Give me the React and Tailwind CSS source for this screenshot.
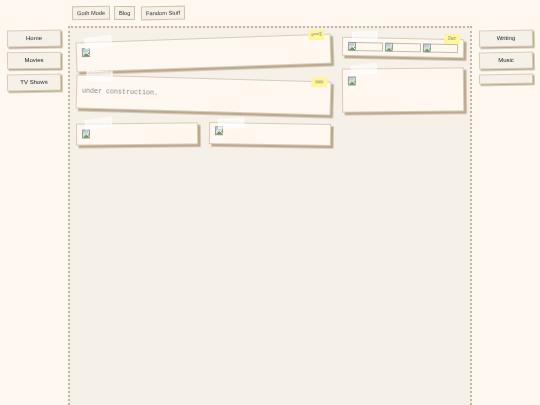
import React from "react";

const BrokenImage = () => (
  <svg width="8" height="9" viewBox="0 0 8 9" className="block shrink-0">
    <rect x="0.5" y="0.5" width="7" height="8" fill="#dfe6e6" stroke="#9a9c90" />
    <path d="M1 1h5v3H1z" fill="#bccfdc" />
    <path d="M1 8l3-3 1.500 1L7 4.500V8z" fill="#6f9a5c" />
    <path d="M4.500 4.500l3 3" stroke="#ffffff" strokeWidth="1" />
  </svg>
);

const Tape = ({ className }) => (
  <div
    className={`absolute h-[10px] bg-white/60 border border-dashed border-white/80 ${className}`}
  />
);

const Sticky = ({ label, className }) => (
  <div
    className={`absolute w-[16px] h-[10px] bg-[#fff59c] flex items-center justify-center text-[4.5px] text-[#8a8a70] font-['Liberation_Mono',monospace] ${className}`}
  >
    {label}
  </div>
);

const NavButton = ({ label, className }) => (
  <div
    className={`w-[54px] h-[17px] flex items-center justify-center bg-[#f5f0e8] border-[1.5px] border-[#d8ccb8] shadow-[1.5px_1.5px_0_#bba98e] text-[6px] text-[#222222] will-change-transform ${className}`}
  >
    {label}
  </div>
);

const TopButton = ({ label, className }) => (
  <div
    className={`h-[14px] px-[4px] flex items-center bg-[#f5f0e8] border-[1.5px] border-[#cfc2ac] text-[5.7px] text-[#333333] will-change-transform ${className}`}
  >
    {label}
  </div>
);

const Card = ({ className, children }) => (
  <div
    className={`relative bg-[#fff8f0] border-[1.5px] border-[#d8ccb8] shadow-[2.5px_2.5px_0_#bba98e] will-change-transform ${className}`}
  >
    {children}
  </div>
);

const Thumb = () => (
  <div className="flex-1 h-[9px] border border-[#c9bba4]">
    <div className="-mt-px -ml-px">
      <BrokenImage />
    </div>
  </div>
);

export default function App() {
  return (
    <div className="h-[405px] overflow-hidden flex bg-[#fff8f0] font-['Liberation_Sans',Arial,sans-serif]">
      {/* left nav */}
      <div className="w-[68px] shrink-0 pt-[30px] pl-[7px] flex flex-col gap-[5px]">
        <NavButton label="Home" className="rotate-[-1deg]" />
        <NavButton label="Movies" className="rotate-[-0.5deg]" />
        <NavButton label="TV Shows" className="rotate-[-1deg]" />
      </div>

      {/* center */}
      <div className="w-[404px] shrink-0 flex flex-col">
        <div className="h-[26px] shrink-0 pt-[6px] pl-[4px] flex items-start">
          <TopButton label="Goth Mode" className="rotate-[-1deg]" />
          <TopButton label="Blog" className="ml-[4px] rotate-[0.5deg]" />
          <TopButton label="Fandom Stuff" className="ml-[5px] rotate-[-1deg]" />
        </div>
        <main className="flex-1 bg-[#f5f0e8] border-2 border-b-0 border-dotted border-[#c4b8a4] pt-[10px] pl-[6px] flex gap-[11px] items-start">
          {/* left column */}
          <div className="w-[255px] shrink-0 flex flex-col">
            <Card className="h-[30px] rotate-[-2deg] pt-[5px] pl-[5px]">
              <Tape className="w-[27px] h-[11px] -top-[6px] left-[8px] rotate-[-5deg]" />
              <Sticky label="o==3" className="-top-[5px] right-[5px]" />
              <BrokenImage />
            </Card>
            <Card className="h-[34px] mt-[10px] rotate-[1.6deg] pt-[10px] pl-[5px]">
              <Tape className="w-[26px] -top-[5px] left-[9px] rotate-[-1deg]" />
              <Sticky label="wow" className="-top-[5px] right-[3px] w-[14px]" />
              <p className="text-[6.67px] leading-[10px] text-[#888888] font-['Liberation_Mono',monospace]">
                under construction.
              </p>
            </Card>
            <div className="mt-[11px] flex gap-[11px]">
              <Card className="w-[122px] h-[22px] rotate-[-0.6deg] pt-[5px] pl-[5px]">
                <Tape className="w-[27px] -top-[6px] left-[8px] rotate-[-6deg]" />
                <BrokenImage />
              </Card>
              <Card className="w-[122px] h-[22px] rotate-[0.9deg] pt-[3px] pl-[5px]">
                <Tape className="w-[26px] -top-[5px] left-[8px] rotate-[-3deg]" />
                <BrokenImage />
              </Card>
            </div>
          </div>

          {/* right column */}
          <div className="w-[122px] shrink-0 flex flex-col">
            <Card className="h-[19px] rotate-[1.2deg] px-[5px] pt-[4px] flex gap-[2px]">
              <Tape className="w-[25px] -top-[7px] left-[9px] rotate-[-4deg]" />
              <Sticky label="Dwz" className="-top-[6px] right-[3px] w-[13px]" />
              <Thumb />
              <Thumb />
              <Thumb />
            </Card>
            <Card className="h-[44px] mt-[11px] rotate-[-0.6deg] pt-[7px] pl-[5px]">
              <Tape className="w-[26px] -top-[5px] left-[8px] rotate-[-5deg]" />
              <BrokenImage />
            </Card>
          </div>
        </main>
      </div>

      {/* right nav */}
      <div className="flex-1 pt-[30px] pl-[7px] flex flex-col gap-[5px]">
        <NavButton label="Writing" className="rotate-[-1deg]" />
        <NavButton label="Music" className="rotate-[-1deg]" />
        <NavButton label="" className="!h-[10px] rotate-[-1deg]" />
      </div>
    </div>
  );
}
